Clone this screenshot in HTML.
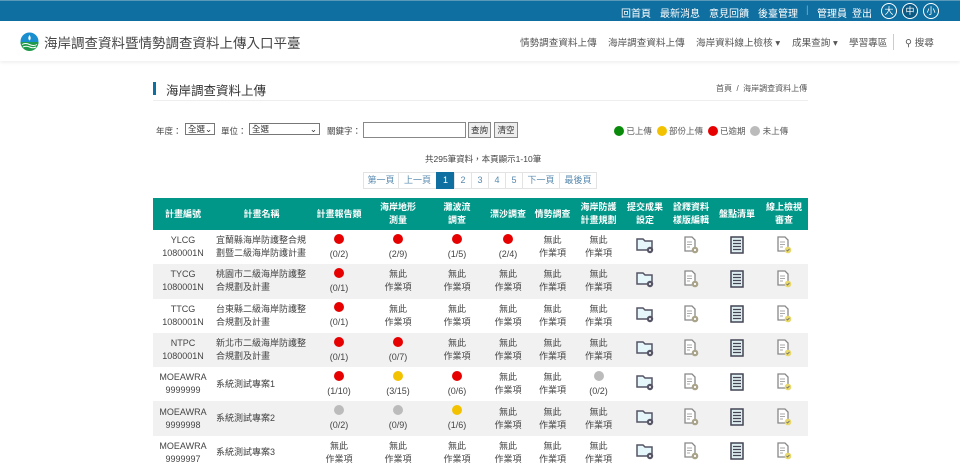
<!DOCTYPE html>
<html><head><meta charset="utf-8"><style>
*{margin:0;padding:0;box-sizing:border-box}
body{width:960px;height:468px;overflow:hidden;background:#fff;font-family:"Liberation Sans","Noto Sans CJK TC",sans-serif;color:#333;position:relative}
.top{height:21px;background:#0f6fa0;border-top:1px solid #5a9ab8;color:#fff;font-size:10px;position:relative}
.top span{position:absolute;top:4px;white-space:nowrap}
.circ{position:absolute;top:2px;width:16px;height:16px;border:1px solid #fff;border-radius:50%;font-size:9px;text-align:center;line-height:14px}
.nav{height:40px;box-shadow:0 2px 3px rgba(0,0,0,.06);position:relative;font-size:9.6px;color:#555}
.nav span{position:absolute;top:14px;white-space:nowrap}
.a{position:absolute;white-space:nowrap}
table{position:absolute;left:153px;top:198px;width:655px;border-collapse:collapse;font-size:9px}
th{background:#009688;color:#fff;font-weight:bold;height:32px;line-height:13px;font-size:9px}
td{height:34.3px;text-align:center;line-height:13px;color:#444}
tr:nth-child(odd) td{background:#f1f1f1}
td.n{text-align:left;padding-left:3px}
.d{display:inline-block;width:10px;height:10px;border-radius:50%}
.r{background:#e60000}.y{background:#f2c200}.g{background:#bbb}
.pg{position:absolute;top:172px;height:17px;border:1px solid #e3e3e3;font-size:9px;color:#5a8bb0;line-height:15px;text-align:center}
</style></head><body>
<svg width="0" height="0" style="position:absolute"><defs>
<symbol id="fo" viewBox="0 0 20 18"><path d="M2 3h6l2 2h7v9H2z" fill="#e6f7fb" stroke="#556" stroke-width="1.5"/><circle cx="15" cy="14" r="3.2" fill="#556"/><circle cx="15" cy="14" r="1" fill="#fff"/></symbol>
<symbol id="doc" viewBox="0 0 20 18"><path d="M4 1h7l3 3v11H4z" fill="#fff" stroke="#888" stroke-width="1.3"/><path d="M6 6h5M6 8.5h5M6 11h3" stroke="#aaa" stroke-width="1"/><circle cx="14" cy="14" r="3.3" fill="#a9a38a"/><circle cx="14" cy="14" r="1.1" fill="#fff"/></symbol>
<symbol id="ls" viewBox="0 0 20 18"><rect x="4" y="1" width="12" height="16" fill="#dff0f2" stroke="#445" stroke-width="1.5"/><path d="M6 4.5h8M6 7.5h8M6 10.5h8M6 13.5h8" stroke="#445" stroke-width="1.2"/></symbol>
<symbol id="ck" viewBox="0 0 20 18"><path d="M4 1h7l3 3v11H4z" fill="#fff" stroke="#888" stroke-width="1.3"/><path d="M6 6h5M6 8.5h5M6 11h3" stroke="#aaa" stroke-width="1"/><circle cx="14" cy="14" r="3.3" fill="#e8d86a"/><path d="M12.5 14l1 1 2-2" stroke="#777" stroke-width="0.9" fill="none"/></symbol>
</defs></svg>
<div class="top">
<span style="left:621px">回首頁</span><span style="left:660px">最新消息</span><span style="left:709px">意見回饋</span><span style="left:758px">後臺管理</span><span style="left:806px;color:#8ab">|</span><span style="left:817px">管理員</span><span style="left:852px">登出</span>
<div class="circ" style="left:881px">大</div><div class="circ" style="left:902px;background:#0b5a85">中</div><div class="circ" style="left:923px">小</div>
</div>
<div class="nav">
<svg class="a" style="left:20px;top:11px" width="19" height="19" viewBox="0 0 19 19"><circle cx="9.5" cy="9.5" r="9" fill="#1a8fd0"/><path d="M0.5 10h18a9 9 0 0 1-18 0z" fill="#1e9a4a"/><path d="M2 12.5q3.5-2 7.5 0t7.5 0M3 15q3-1.5 6.5 0t6.5 0" stroke="#fff" stroke-width="1" fill="none"/><path d="M9.5 3q2.5 3.5 0 5.5q-2.5-2 0-5.5z" fill="#fff"/></svg>
<span style="left:44px;top:11px;font-size:13.5px;color:#444">海岸調查資料暨情勢調查資料上傳入口平臺</span>
<span style="left:520px">情勢調查資料上傳</span><span style="left:608px">海岸調查資料上傳</span><span style="left:696px">海岸資料線上檢核 ▾</span><span style="left:792px">成果查詢 ▾</span><span style="left:849px">學習專區</span>
<div class="a" style="left:893px;top:13px;width:1px;height:16px;background:#ccc"></div>
<span style="left:905px">⚲ 搜尋</span>
</div>
<div class="a" style="left:153px;top:82px;width:3px;height:13px;background:#0f6fa0"></div>
<div class="a" style="left:166px;top:80px;font-size:12.5px;color:#333">海岸調查資料上傳</div>
<div class="a" style="left:716px;top:83px;font-size:8px;color:#555">首頁 &nbsp;/&nbsp; 海岸調查資料上傳</div>
<div class="a" style="left:153px;top:100px;width:655px;height:1px;background:#eee"></div>
<div class="a" style="left:156px;top:125px;font-size:8.5px;color:#444">年度：</div>
<div class="a" style="left:185px;top:123px;width:30px;height:12px;border:1px solid #777;font-size:8.5px;line-height:10px;padding-left:2px">全選⌄</div>
<div class="a" style="left:221px;top:125px;font-size:8.5px;color:#444">單位：</div>
<div class="a" style="left:249px;top:123px;width:71px;height:12px;border:1px solid #777;font-size:8.5px;line-height:10px;padding-left:2px">全選<span style="float:right;padding-right:2px">⌄</span></div>
<div class="a" style="left:327px;top:125px;font-size:8.5px;color:#444">關鍵字：</div>
<div class="a" style="left:363px;top:122px;width:103px;height:16px;border:1px solid #888"></div>
<div class="a" style="left:468px;top:122px;width:23px;height:16px;border:1px solid #888;background:#eee;font-size:8.5px;text-align:center;line-height:14px">查詢</div>
<div class="a" style="left:494px;top:122px;width:24px;height:16px;border:1px solid #888;background:#eee;font-size:8.5px;text-align:center;line-height:14px">清空</div>
<div class="a" style="left:614px;top:125px;font-size:8.5px;color:#555">
<span class="d" style="background:#0a8a0a;vertical-align:-2px"></span> 已上傳 &nbsp;<span class="d y" style="vertical-align:-2px"></span> 部份上傳 &nbsp;<span class="d r" style="vertical-align:-2px"></span> 已逾期 &nbsp;<span class="d g" style="vertical-align:-2px"></span> 未上傳</div>
<div class="a" style="left:425px;top:153px;font-size:8.5px;color:#444">共295筆資料，本頁顯示1-10筆</div>
<div class="pg" style="left:363px;width:36px">第一頁</div><div class="pg" style="left:398px;width:39px">上一頁</div>
<div class="pg" style="left:436px;width:19px;background:#0f6fa0;color:#fff;border-color:#0f6fa0">1</div>
<div class="pg" style="left:454px;width:18px">2</div><div class="pg" style="left:471px;width:18px">3</div><div class="pg" style="left:488px;width:18px">4</div><div class="pg" style="left:505px;width:18px">5</div>
<div class="pg" style="left:522px;width:38px">下一頁</div><div class="pg" style="left:559px;width:38px">最後頁</div>
<table>
<colgroup><col style="width:60px"><col style="width:97px"><col style="width:58px"><col style="width:60px"><col style="width:58px"><col style="width:44px"><col style="width:45px"><col style="width:47px"><col style="width:46px"><col style="width:46px"><col style="width:46px"><col style="width:48px"></colgroup>
<tr><th>計畫編號</th><th>計畫名稱</th><th>計畫報告類</th><th>海岸地形<br>測量</th><th>灘波流<br>調查</th><th>漂沙調查</th><th>情勢調查</th><th>海岸防護<br>計畫規劃</th><th>提交成果<br>設定</th><th>詮釋資料<br>樣版編輯</th><th>盤點清單</th><th>線上檢視<br>審查</th></tr>
<tr><td>YLCG<br>1080001N</td><td class="n">宜蘭縣海岸防護整合規劃暨二級海岸防護計畫</td><td><span class="d r"></span><br>(0/2)</td><td><span class="d r"></span><br>(2/9)</td><td><span class="d r"></span><br>(1/5)</td><td><span class="d r"></span><br>(2/4)</td><td>無此<br>作業項</td><td>無此<br>作業項</td><td><svg width="20" height="18"><use href="#fo"/></svg></td><td><svg width="20" height="18"><use href="#doc"/></svg></td><td><svg width="20" height="18"><use href="#ls"/></svg></td><td><svg width="20" height="18"><use href="#ck"/></svg></td></tr>
<tr><td>TYCG<br>1080001N</td><td class="n">桃園市二級海岸防護整合規劃及計畫</td><td><span class="d r"></span><br>(0/1)</td><td>無此<br>作業項</td><td>無此<br>作業項</td><td>無此<br>作業項</td><td>無此<br>作業項</td><td>無此<br>作業項</td><td><svg width="20" height="18"><use href="#fo"/></svg></td><td><svg width="20" height="18"><use href="#doc"/></svg></td><td><svg width="20" height="18"><use href="#ls"/></svg></td><td><svg width="20" height="18"><use href="#ck"/></svg></td></tr>
<tr><td>TTCG<br>1080001N</td><td class="n">台東縣二級海岸防護整合規劃及計畫</td><td><span class="d r"></span><br>(0/1)</td><td>無此<br>作業項</td><td>無此<br>作業項</td><td>無此<br>作業項</td><td>無此<br>作業項</td><td>無此<br>作業項</td><td><svg width="20" height="18"><use href="#fo"/></svg></td><td><svg width="20" height="18"><use href="#doc"/></svg></td><td><svg width="20" height="18"><use href="#ls"/></svg></td><td><svg width="20" height="18"><use href="#ck"/></svg></td></tr>
<tr><td>NTPC<br>1080001N</td><td class="n">新北市二級海岸防護整合規劃及計畫</td><td><span class="d r"></span><br>(0/1)</td><td><span class="d r"></span><br>(0/7)</td><td>無此<br>作業項</td><td>無此<br>作業項</td><td>無此<br>作業項</td><td>無此<br>作業項</td><td><svg width="20" height="18"><use href="#fo"/></svg></td><td><svg width="20" height="18"><use href="#doc"/></svg></td><td><svg width="20" height="18"><use href="#ls"/></svg></td><td><svg width="20" height="18"><use href="#ck"/></svg></td></tr>
<tr><td>MOEAWRA<br>9999999</td><td class="n">系統測試專案1</td><td><span class="d r"></span><br>(1/10)</td><td><span class="d y"></span><br>(3/15)</td><td><span class="d r"></span><br>(0/6)</td><td>無此<br>作業項</td><td>無此<br>作業項</td><td><span class="d g"></span><br>(0/2)</td><td><svg width="20" height="18"><use href="#fo"/></svg></td><td><svg width="20" height="18"><use href="#doc"/></svg></td><td><svg width="20" height="18"><use href="#ls"/></svg></td><td><svg width="20" height="18"><use href="#ck"/></svg></td></tr>
<tr><td>MOEAWRA<br>9999998</td><td class="n">系統測試專案2</td><td><span class="d g"></span><br>(0/2)</td><td><span class="d g"></span><br>(0/9)</td><td><span class="d y"></span><br>(1/6)</td><td>無此<br>作業項</td><td>無此<br>作業項</td><td>無此<br>作業項</td><td><svg width="20" height="18"><use href="#fo"/></svg></td><td><svg width="20" height="18"><use href="#doc"/></svg></td><td><svg width="20" height="18"><use href="#ls"/></svg></td><td><svg width="20" height="18"><use href="#ck"/></svg></td></tr>
<tr><td>MOEAWRA<br>9999997</td><td class="n">系統測試專案3</td><td>無此<br>作業項</td><td>無此<br>作業項</td><td>無此<br>作業項</td><td>無此<br>作業項</td><td>無此<br>作業項</td><td>無此<br>作業項</td><td><svg width="20" height="18"><use href="#fo"/></svg></td><td><svg width="20" height="18"><use href="#doc"/></svg></td><td><svg width="20" height="18"><use href="#ls"/></svg></td><td><svg width="20" height="18"><use href="#ck"/></svg></td></tr>
</table>
</body></html>
